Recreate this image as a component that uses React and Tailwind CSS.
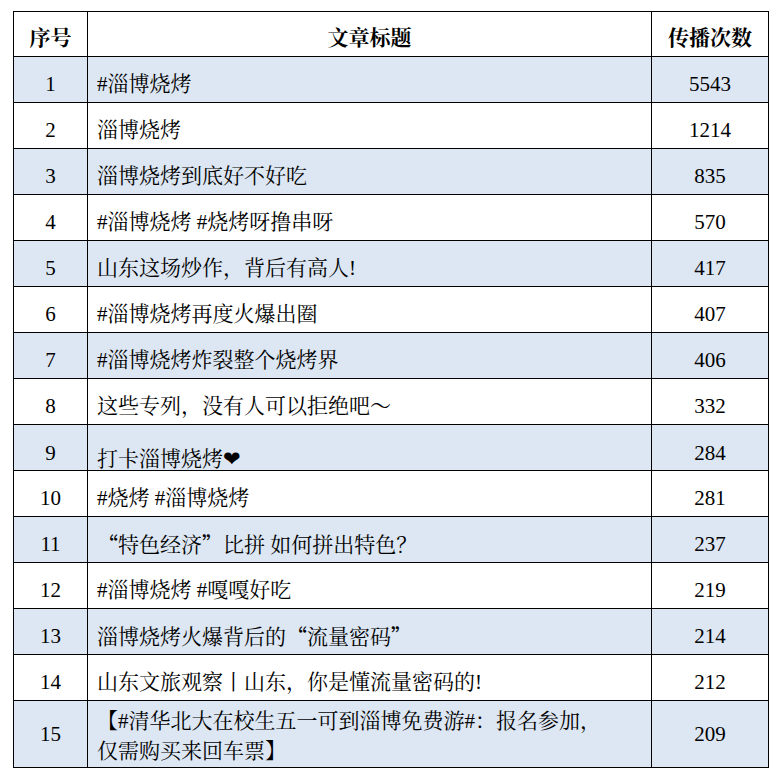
const Q = ({ children }) => (
  <span style={{ fontFamily: '"Noto Sans CJK SC", sans-serif' }}>{children}</span>
);

const rows = [
  ["1", "#淄博烧烤", "5543"],
  ["2", "淄博烧烤", "1214"],
  ["3", "淄博烧烤到底好不好吃", "835"],
  ["4", "#淄博烧烤 #烧烤呀撸串呀", "570"],
  ["5", "山东这场炒作，背后有高人!", "417"],
  ["6", "#淄博烧烤再度火爆出圈", "407"],
  ["7", "#淄博烧烤炸裂整个烧烤界", "406"],
  ["8", "这些专列，没有人可以拒绝吧～", "332"],
  ["9", "打卡淄博烧烤❤", "284"],
  ["10", "#烧烤 #淄博烧烤", "281"],
  ["11", <><Q>“</Q>特色经济<Q>”</Q>比拼 如何拼出特色？</>, "237"],
  ["12", "#淄博烧烤 #嘎嘎好吃", "219"],
  ["13", <>淄博烧烤火爆背后的<Q>“</Q>流量密码<Q>”</Q></>, "214"],
  ["14", "山东文旅观察丨山东，你是懂流量密码的!", "212"],
  ["15", <>【#清华北大在校生五一可到淄博免费游#：报名参加，<br />仅需购买来回车票】</>, "209"],
];

const font = {
  fontFamily: '"Liberation Serif", "Noto Serif CJK SC", "Noto Sans CJK SC", serif',
};

export default function App() {
  return (
    <div className="w-[778px] h-[778px] bg-white pl-[13px] pt-[11px]" style={font}>
      <table className="w-[756px] border-collapse border border-black text-[21px] text-black leading-[22px]">
        <thead>
          <tr className="h-[45px]">
            <th className="w-[74px] border border-black font-bold p-0 pt-[7px]">序号</th>
            <th className="w-[564px] border border-black font-bold p-0 pt-[7px]">文章标题</th>
            <th className="border border-black font-bold p-0 pt-[7px]">传播次数</th>
          </tr>
        </thead>
        <tbody>
          {rows.map(([n, title, count], i) => (
            <tr
              key={n}
              className={
                (i % 2 === 0 ? "bg-[#dde7f3] " : "bg-white ") +
                (n === "15" ? "h-[67px]" : "h-[46px]")
              }
            >
              <td className={"border border-black text-center p-0 " + (n === "15" ? "" : n === "9" ? "pt-[10px]" : "pt-[8px]")}>
                {n}
              </td>
              <td
                className={
                  "border border-black p-0 pl-[9px] pr-2 text-left " +
                  (n === "9" ? "pt-[22px]" : n === "15" ? "pt-[4px] leading-[30px]" : "pt-[8px]")
                }
              >
                {title}
              </td>
              <td className={"border border-black text-center p-0 " + (n === "15" ? "" : n === "9" ? "pt-[10px]" : "pt-[8px]")}>
                {count}
              </td>
            </tr>
          ))}
        </tbody>
      </table>
    </div>
  );
}
